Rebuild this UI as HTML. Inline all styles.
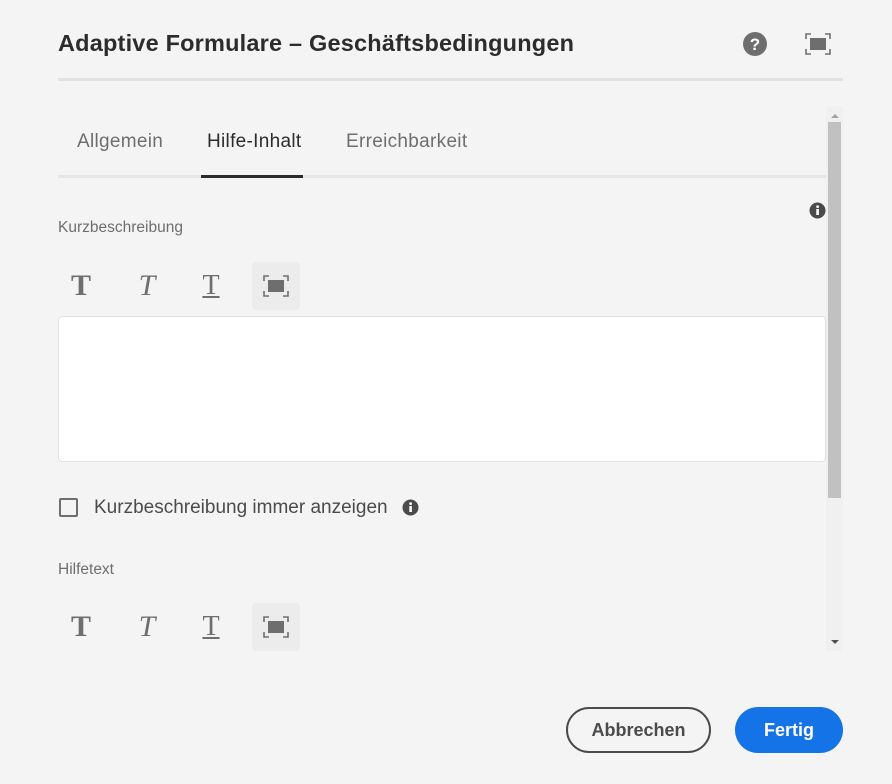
<!DOCTYPE html>
<html><head><style>
*{margin:0;padding:0;box-sizing:border-box}
body{width:892px;height:784px;background:#f4f4f4;font-family:"Liberation Sans",sans-serif;position:relative;overflow:hidden;color:#2c2c2c}
.a{position:absolute;white-space:nowrap}
.ib{position:absolute;width:48px;height:48px;display:flex;align-items:center;justify-content:center}
</style></head><body>
<div class="a" style="left:58px;top:30px;font-size:23.5px;font-weight:bold;color:#2c2c2c;letter-spacing:0.2px">Adaptive Formulare – Geschäftsbedingungen</div>
<svg class="a" style="left:742px;top:31px" width="26" height="26" viewBox="0 0 26 26"><circle cx="13" cy="13" r="12" fill="#6e6e6e"/><text x="13" y="19" font-size="17" font-weight="bold" fill="#fff" text-anchor="middle" font-family="Liberation Sans">?</text></svg>
<svg class="a" style="left:805px;top:33px" width="26" height="22" viewBox="0 0 26 22"><rect x="5" y="5" width="16" height="12" fill="#6e6e6e"/><path d="M1 6V1H6M20 1H25V6M25 16V21H20M6 21H1V16" stroke="#6e6e6e" stroke-width="1.6" fill="none"/></svg>
<div class="a" style="left:58px;top:78px;width:785px;height:3px;background:#e1e1e1"></div>
<div class="a" style="left:826px;top:106px;width:17px;height:545px;background:#f0f0f0"></div>
<div class="a" style="left:828px;top:122px;width:13px;height:376px;background:#c1c1c1"></div>
<div class="a" style="left:831px;top:114px;border:4px solid transparent;border-bottom:4px solid #a3a3a3;border-top:0"></div>
<div class="a" style="left:831px;top:640px;border:4px solid transparent;border-top:4px solid #505050;border-bottom:0"></div>
<div class="a" style="left:77px;top:131px;font-size:19px;letter-spacing:0.3px;color:#6e6e6e">Allgemein</div>
<div class="a" style="left:207px;top:131px;font-size:19px;letter-spacing:0.3px;color:#2c2c2c">Hilfe-Inhalt</div>
<div class="a" style="left:346px;top:131px;font-size:19px;letter-spacing:0.3px;color:#6e6e6e">Erreichbarkeit</div>
<div class="a" style="left:58px;top:175px;width:768px;height:3px;background:#e6e6e6"></div>
<div class="a" style="left:201px;top:175px;width:102px;height:3px;background:#2c2c2c"></div>
<svg class="a" style="left:809px;top:202px" width="17" height="17"><circle cx="8.5" cy="8.5" r="8" fill="#4b4b4b"/><rect x="7.3" y="7" width="2.6" height="6" fill="#fff"/><circle cx="8.6" cy="4.6" r="1.4" fill="#fff"/></svg>
<div class="a" style="left:58px;top:219px;font-size:15.5px;color:#6e6e6e">Kurzbeschreibung</div>
<div class="ib" style="left:57px;top:262px;font-family:'Liberation Serif';font-weight:bold;font-size:30px;color:#6e6e6e">T</div>
<div class="ib" style="left:123px;top:262px;font-family:'Liberation Serif';font-style:italic;font-size:30px;color:#6e6e6e">T</div>
<div class="ib" style="left:187px;top:262px;font-family:'Liberation Serif';font-size:28px;color:#6e6e6e;text-decoration:underline">T</div>
<div class="ib" style="left:252px;top:262px;background:#ececec;border-radius:4px"><svg width="26" height="22" viewBox="0 0 26 22"><rect x="5" y="5" width="16" height="12" fill="#6e6e6e"/><path d="M1 6V1H6M20 1H25V6M25 16V21H20M6 21H1V16" stroke="#6e6e6e" stroke-width="1.6" fill="none"/></svg></div>
<div class="a" style="left:58px;top:316px;width:768px;height:146px;background:#fff;border:1px solid #e1e1e1;border-radius:4px"></div>
<div class="a" style="left:59px;top:498px;width:19px;height:19px;border:2px solid #6e6e6e;border-radius:2px"></div>
<div class="a" style="left:94px;top:497px;font-size:19px;color:#4b4b4b">Kurzbeschreibung immer anzeigen</div>
<svg class="a" style="left:402px;top:499px" width="17" height="17"><circle cx="8.5" cy="8.5" r="8" fill="#4b4b4b"/><rect x="7.3" y="7" width="2.6" height="6" fill="#fff"/><circle cx="8.6" cy="4.6" r="1.4" fill="#fff"/></svg>
<div class="a" style="left:58px;top:561px;font-size:15.5px;color:#6e6e6e">Hilfetext</div>
<div class="ib" style="left:57px;top:603px;font-family:'Liberation Serif';font-weight:bold;font-size:30px;color:#6e6e6e">T</div>
<div class="ib" style="left:123px;top:603px;font-family:'Liberation Serif';font-style:italic;font-size:30px;color:#6e6e6e">T</div>
<div class="ib" style="left:187px;top:603px;font-family:'Liberation Serif';font-size:28px;color:#6e6e6e;text-decoration:underline">T</div>
<div class="ib" style="left:252px;top:603px;background:#ececec;border-radius:4px"><svg width="26" height="22" viewBox="0 0 26 22"><rect x="5" y="5" width="16" height="12" fill="#6e6e6e"/><path d="M1 6V1H6M20 1H25V6M25 16V21H20M6 21H1V16" stroke="#6e6e6e" stroke-width="1.6" fill="none"/></svg></div>
<div class="a" style="left:566px;top:707px;width:145px;height:46px;border:2px solid #4b4b4b;border-radius:23px;font-size:18px;font-weight:bold;color:#4b4b4b;display:flex;align-items:center;justify-content:center">Abbrechen</div>
<div class="a" style="left:735px;top:707px;width:108px;height:46px;background:#1473e6;border-radius:23px;font-size:18px;font-weight:bold;color:#fff;display:flex;align-items:center;justify-content:center">Fertig</div>
</body></html>
